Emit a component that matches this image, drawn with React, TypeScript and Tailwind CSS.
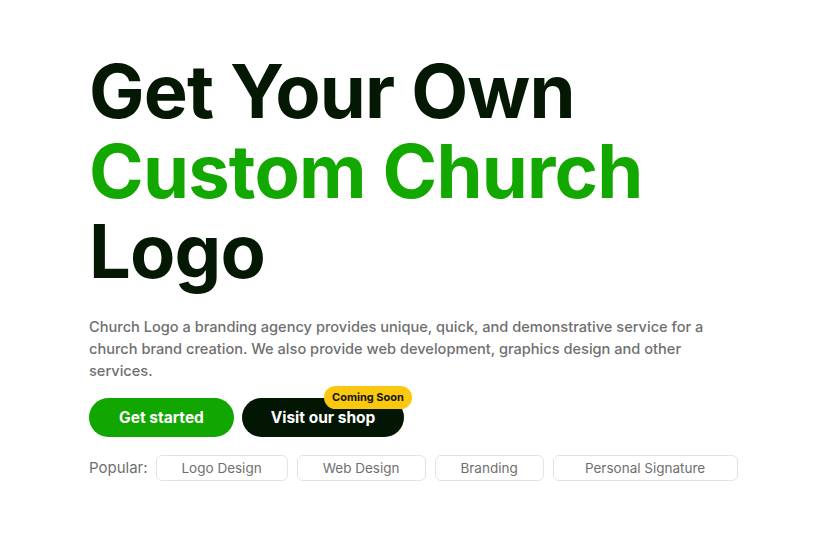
export default function App() {
  const tags = ["Logo Design", "Web Design", "Branding", "Personal Signature"];
  const tagWidths = ["w-[132px]", "w-[129px]", "w-[109px]", "w-[185px]"];

  return (
    <div className="min-h-screen bg-white font-['Inter',sans-serif]">
      <section className="pl-[89px] pt-[51px]">
        <h1 className="text-[74px] font-bold leading-[80px] tracking-[-0.8px] text-[#041804]">
          Get Your Own
          <br />
          <span className="text-[#13a800]">Custom Church</span>
          <br />
          Logo
        </h1>

        <p className="mt-[25px] w-[625px] text-[14.6px] leading-[22px] font-medium text-[#6f6f6f]">
          Church Logo a branding agency provides unique, quick, and demonstrative service for a
          church brand creation. We also provide web development, graphics design and other
          services.
        </p>

        <div className="mt-[16px] flex items-center gap-2">
          <button className="h-[39px] w-[145px] rounded-full bg-[#12a600] text-[15.5px] font-bold text-white">
            Get started
          </button>
          <div className="relative">
            <button className="h-[39px] w-[162px] rounded-full bg-[#031603] text-[15.5px] font-bold text-white">
              Visit our shop
            </button>
            <span className="absolute -top-[12px] left-[82px] flex h-[23px] items-center whitespace-nowrap rounded-full bg-[#f9c80f] px-[8px] text-[11px] font-bold text-[#141414]">
              Coming Soon
            </span>
          </div>
        </div>

        <div className="mt-[18px] flex items-center gap-[9px]">
          <span className="mr-[-1px] text-[15px] text-[#6f6f6f]">Popular:</span>
          {tags.map((t, i) => (
            <span
              key={t}
              className={`${tagWidths[i]} flex h-[26px] items-center justify-center rounded-md border border-[#e3e3e3] text-[13.5px] text-[#6f6f6f]`}
            >
              {t}
            </span>
          ))}
        </div>
      </section>
    </div>
  );
}
